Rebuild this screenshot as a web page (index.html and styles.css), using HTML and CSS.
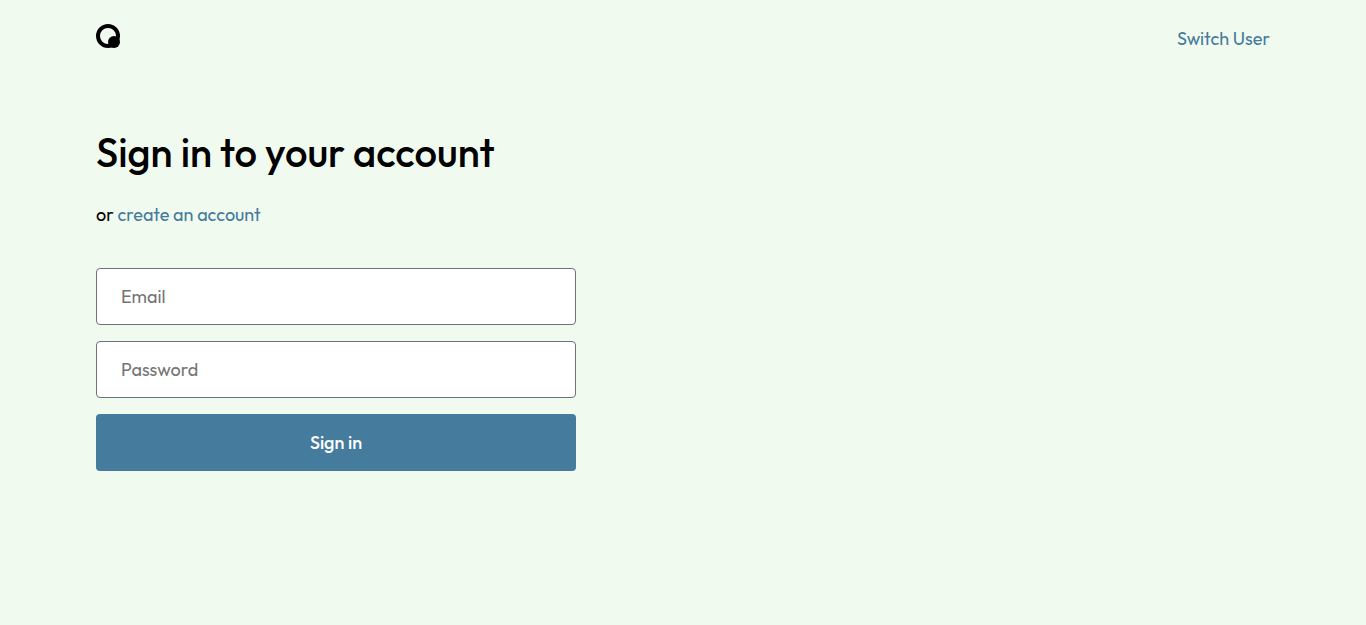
FILE: index.html
```html
<!DOCTYPE html>
<html lang="en">
<head>
<meta charset="utf-8">
<meta name="viewport" content="width=device-width, initial-scale=1">
<title>Sign in</title>
<link rel="stylesheet" href="styles.css">
</head>
<body>
<header class="header">
  <a class="logo" href="#" aria-label="Home">
    <svg class="logo-mark" viewBox="0 0 24 24" width="24" height="24" aria-hidden="true">
      <circle cx="12" cy="12" r="10" fill="none" stroke="#000" stroke-width="4"/>
      <circle cx="18" cy="18" r="6" fill="#000"/>
    </svg>
  </a>
  <a class="link" href="#">Switch User</a>
</header>
<main class="main">
  <h1 class="title">Sign in to your account</h1>
  <p class="subtitle">or <a class="link" href="#">create an account</a></p>
  <form class="form">
    <input class="field" type="email" placeholder="Email" aria-label="Email">
    <input class="field" type="password" placeholder="Password" aria-label="Password">
    <button class="submit" type="submit">Sign in</button>
  </form>
</main>
</body>
</html>
```
FILE: styles.css
```css
*, *::before, *::after { box-sizing: border-box; }
body {
  margin: 0;
  padding: 24px 96px;
  background: #f1faee;
  color: #000;
  font-family: Outfit, Lato, sans-serif;
  font-size: 18px;
  line-height: 30px;
}
.header { display: flex; justify-content: space-between; align-items: flex-start; }
.logo-mark { display: block; }
.link { color: #457b9d; text-decoration: none; }
.main { padding-top: 72px; }
.title { margin: 0; font-size: 40px; font-weight: 500; line-height: 52px; }
.subtitle { margin: 22px 0 38px; }
.form { display: flex; flex-direction: column; gap: 16px; max-width: 480px; }
.field, .submit { height: 57px; border-radius: 4px; font: inherit; }
.field { width: 100%; padding: 0 24px; border: 1px solid #6f7278; background: #fff; color: #000; }
.field::placeholder { color: #757575; }
.submit { border: 0; background: #457b9d; color: #fff; font-weight: 500; cursor: pointer; }
```
